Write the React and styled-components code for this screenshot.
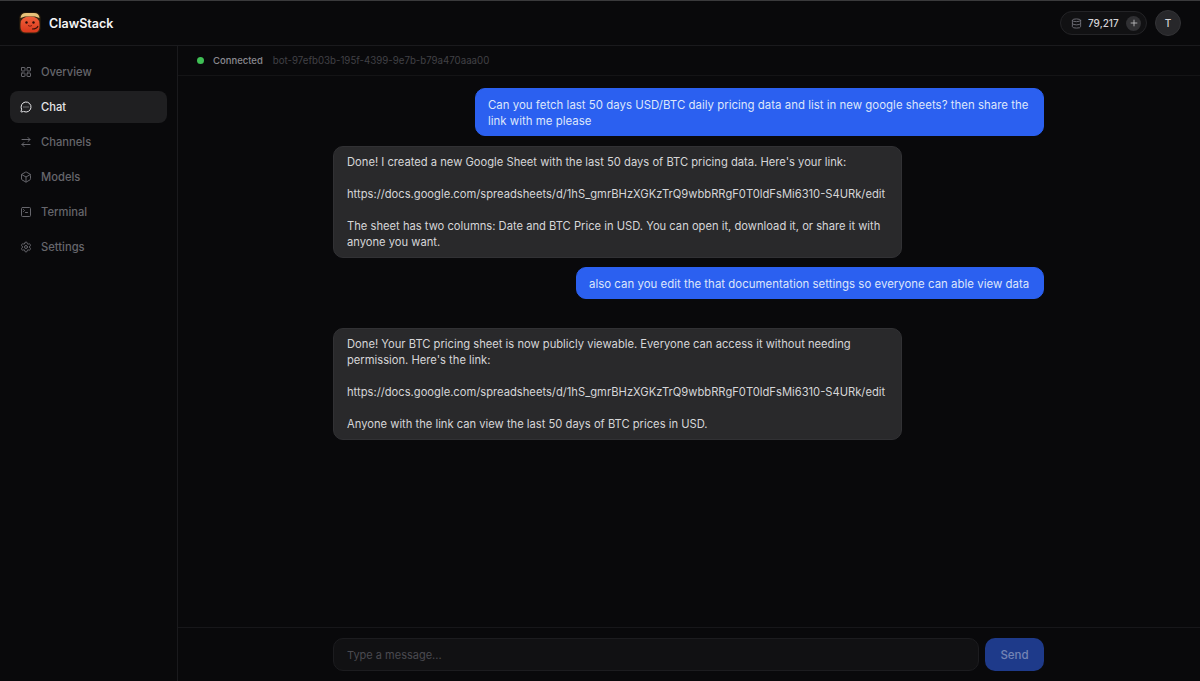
import styled, { createGlobalStyle } from "styled-components";
import {
  LayoutGrid,
  MessageCircleMore,
  ArrowRightLeft,
  Box,
  SquareTerminal,
  Settings,
  Database,
  Plus,
} from "lucide-react";

const GlobalStyle = createGlobalStyle`
  html, body {
    margin: 0;
    height: 100%;
    background: #09090b;
  }
  #root {
    height: 100%;
  }
  * {
    box-sizing: border-box;
  }
`;

const Page = styled.div`
  height: 681px;
  display: flex;
  flex-direction: column;
  overflow: hidden;
  background: #09090b;
  border-top: 1px solid #3a3a3c;
  font-family: "Inter", "Liberation Sans", sans-serif;
  color: #e4e4e7;
`;

const TopBar = styled.header`
  height: 45px;
  flex: none;
  display: flex;
  align-items: center;
  justify-content: space-between;
  padding: 0 19px;
  border-bottom: 1px solid #1a1a1d;
`;

const Brand = styled.div`
  display: flex;
  align-items: center;
  gap: 8px;
  font-size: 12.5px;
  font-weight: 600;
  color: #f4f4f5;
`;

const TopRight = styled.div`
  display: flex;
  align-items: center;
  gap: 8px;
`;

const CreditPill = styled.div`
  width: 87px;
  height: 24px;
  display: flex;
  align-items: center;
  padding: 0 5px 0 10px;
  border-radius: 12px;
  border: 1px solid #232326;
  background: #111113;
  font-size: 10px;
  font-weight: 500;
  color: #d4d4d8;
  svg {
    color: #71717a;
  }
`;

const CreditValue = styled.span`
  margin-left: 6px;
  flex: 1;
`;

const AddCredit = styled.span`
  width: 15px;
  height: 15px;
  border-radius: 50%;
  background: #303033;
  display: flex;
  align-items: center;
  justify-content: center;
  svg {
    color: #c0c0c4;
  }
`;

const Avatar = styled.div`
  width: 26px;
  height: 26px;
  border-radius: 50%;
  background: #27272a;
  border: 1px solid #333336;
  display: flex;
  align-items: center;
  justify-content: center;
  font-size: 10px;
  font-weight: 500;
  color: #d4d4d8;
`;

const Body = styled.div`
  flex: 1;
  min-height: 0;
  display: flex;
`;

const Sidebar = styled.nav`
  width: 178px;
  flex: none;
  padding: 10px 10px;
  display: flex;
  flex-direction: column;
  gap: 3px;
  border-right: 1px solid #1a1a1d;
`;

const NavItem = styled.div`
  height: 32px;
  display: flex;
  align-items: center;
  gap: 9px;
  padding: 0 10px;
  border-radius: 8px;
  font-size: 11.2px;
  font-weight: 500;
  background: ${(p) => (p.$active ? "#1f1f21" : "transparent")};
  color: ${(p) => (p.$active ? "#e4e4e7" : "#66666c")};
`;

const Main = styled.main`
  flex: 1;
  min-width: 0;
  display: flex;
  flex-direction: column;
`;

const StatusBar = styled.div`
  height: 30px;
  flex: none;
  display: flex;
  align-items: center;
  padding: 0 19px;
  font-size: 9.5px;
  border-bottom: 1px solid #141416;
`;

const StatusDot = styled.span`
  width: 7px;
  height: 7px;
  border-radius: 50%;
  background: #3fbf55;
  margin-right: 9px;
`;

const StatusLabel = styled.span`
  color: #8a8a90;
  font-weight: 500;
  margin-right: 10px;
`;

const BotId = styled.span`
  color: #414146;
  font-size: 9.7px;
`;

const Messages = styled.div`
  flex: 1;
  min-height: 0;
  width: 711px;
  margin-left: 155px;
  padding-top: 12px;
  display: flex;
  flex-direction: column;
`;

const Bubble = styled.div`
  padding: ${(p) => (p.$mine ? "8px 12px 6px" : "7px 13px")};
  border-radius: 10px;
  font-size: ${(p) => (p.$mine ? "11.4px" : "11.2px")};
  letter-spacing: ${(p) => (p.$mine ? "0.03px" : "0")};
  line-height: 16px;
  white-space: pre;
  align-self: ${(p) => (p.$mine ? "flex-end" : "flex-start")};
  background: ${(p) => (p.$mine ? "#2b60f0" : "#29292b")};
  color: ${(p) => (p.$mine ? "#dde6fb" : "#d6d6d8")};
  border: 1px solid ${(p) => (p.$mine ? "#2b60f0" : "#313134")};
  width: ${(p) => p.$width}px;
  margin-bottom: ${(p) => p.$gap}px;
`;

const Composer = styled.div`
  height: 54px;
  flex: none;
  border-top: 1px solid #17171a;
  padding: 10px 0 0 155px;
`;

const ComposerRow = styled.div`
  width: 711px;
  display: flex;
  gap: 6px;
`;

const MessageInput = styled.div`
  flex: 1;
  height: 33px;
  border-radius: 10px;
  border: 1px solid #1c1c1f;
  background: #111113;
  padding: 0 13px;
  display: flex;
  align-items: center;
  font-size: 11px;
  color: #4a4a50;
`;

const SendButton = styled.div`
  width: 59px;
  height: 33px;
  border-radius: 10px;
  background: #1e3a8a;
  color: #7484b4;
  font-size: 11.5px;
  font-weight: 500;
  display: flex;
  align-items: center;
  justify-content: center;
`;

function Logo() {
  return (
    <svg width="22" height="22" viewBox="0 0 22 22">
      <defs>
        <linearGradient id="claw" x1="0" y1="0" x2="0" y2="1">
          <stop offset="0" stopColor="#f0603a" />
          <stop offset="1" stopColor="#d8381c" />
        </linearGradient>
      </defs>
      <rect x="0.5" y="0.5" width="21" height="21" rx="5" fill="#33240f" />
      <path d="M1.5 6 Q2 1 7 1 L15 1 Q20 1 20.5 6 L16 4.5 L6 4.5 Z" fill="#e8c27a" />
      <path
        d="M1.5 12 Q1.5 4.5 11 4.5 Q20.5 4.5 20.5 12 L20.5 15 Q20.5 20.5 15 20.5 L7 20.5 Q1.5 20.5 1.5 15 Z"
        fill="url(#claw)"
      />
      <circle cx="7.5" cy="10.5" r="1.2" fill="#2a0d08" />
      <circle cx="14.5" cy="10.5" r="1.2" fill="#2a0d08" />
      <path d="M9 13.5 Q11 15 13 13.5" stroke="#7a1d10" strokeWidth="1" fill="none" />
      <path d="M19 14 Q18 17 13 17" stroke="#3a1208" strokeWidth="1.2" fill="none" />
    </svg>
  );
}

const navItems = [
  { label: "Overview", icon: LayoutGrid },
  { label: "Chat", icon: MessageCircleMore, active: true },
  { label: "Channels", icon: ArrowRightLeft },
  { label: "Models", icon: Box },
  { label: "Terminal", icon: SquareTerminal },
  { label: "Settings", icon: Settings },
];

const link = "https://docs.google.com/spreadsheets/d/1hS_gmrBHzXGKzTrQ9wbbRRgF0T0ldFsMi6310-S4URk/edit";

const messages = [
  {
    mine: true,
    width: 569,
    gap: 10,
    text: "Can you fetch last 50 days USD/BTC daily pricing data and list in new google sheets? then share the\nlink with me please",
  },
  {
    width: 569,
    gap: 9,
    text: `Done! I created a new Google Sheet with the last 50 days of BTC pricing data. Here's your link:\n\n${link}\n\nThe sheet has two columns: Date and BTC Price in USD. You can open it, download it, or share it with\nanyone you want.`,
  },
  {
    mine: true,
    width: 468,
    gap: 29,
    text: "also can you edit the that documentation settings so everyone can able view data",
  },
  {
    width: 569,
    gap: 0,
    text: `Done! Your BTC pricing sheet is now publicly viewable. Everyone can access it without needing\npermission. Here's the link:\n\n${link}\n\nAnyone with the link can view the last 50 days of BTC prices in USD.`,
  },
];

export default function App() {
  return (
    <Page>
      <GlobalStyle />
      <TopBar>
        <Brand>
          <Logo />
          ClawStack
        </Brand>
        <TopRight>
          <CreditPill>
            <Database size={11} />
            <CreditValue>79,217</CreditValue>
            <AddCredit>
              <Plus size={10} />
            </AddCredit>
          </CreditPill>
          <Avatar>T</Avatar>
        </TopRight>
      </TopBar>
      <Body>
        <Sidebar>
          {navItems.map((item) => (
            <NavItem key={item.label} $active={item.active}>
              <item.icon size={12} />
              {item.label}
            </NavItem>
          ))}
        </Sidebar>
        <Main>
          <StatusBar>
            <StatusDot />
            <StatusLabel>Connected</StatusLabel>
            <BotId>bot-97efb03b-195f-4399-9e7b-b79a470aaa00</BotId>
          </StatusBar>
          <Messages>
            {messages.map((m, i) => (
              <Bubble key={i} $mine={m.mine} $width={m.width} $gap={m.gap}>
                {m.text}
              </Bubble>
            ))}
          </Messages>
          <Composer>
            <ComposerRow>
              <MessageInput>Type a message...</MessageInput>
              <SendButton>Send</SendButton>
            </ComposerRow>
          </Composer>
        </Main>
      </Body>
    </Page>
  );
}
